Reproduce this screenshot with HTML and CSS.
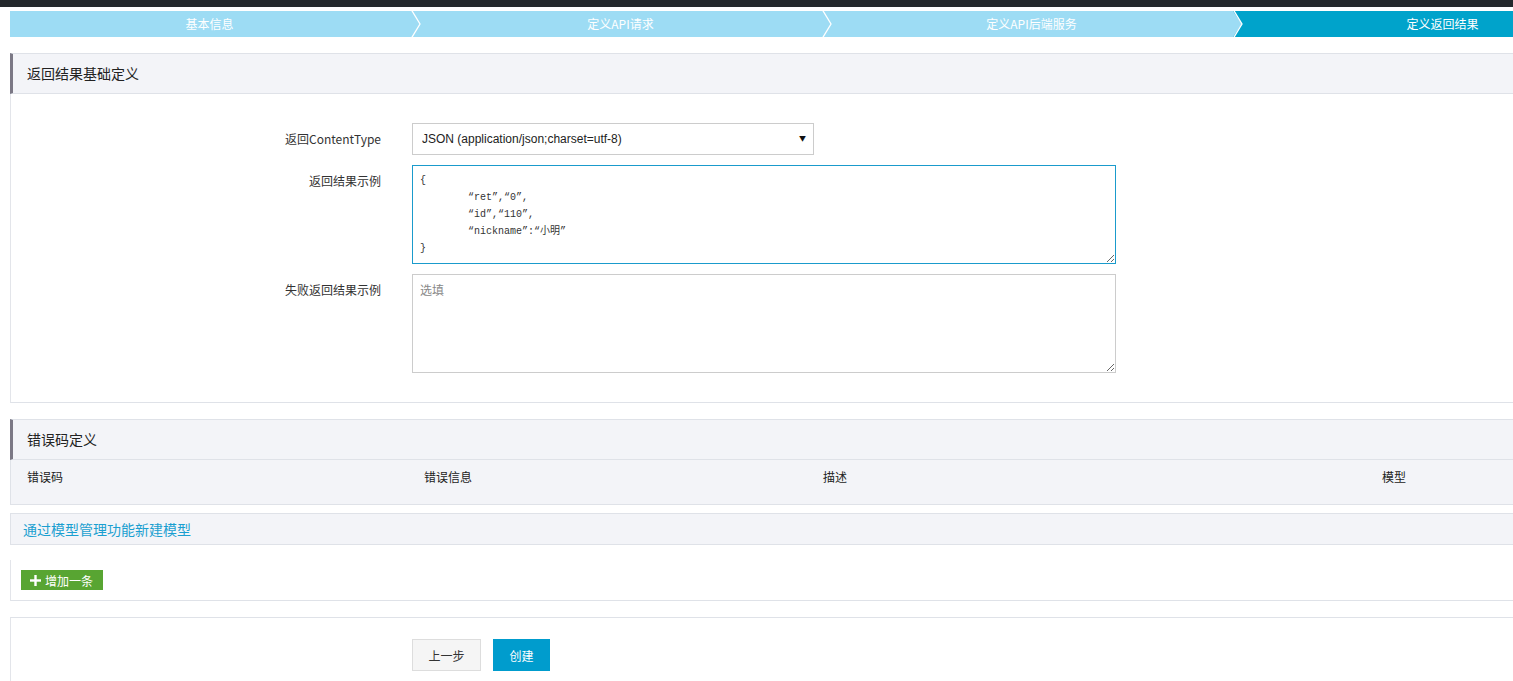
FILE: index.html
```html
<!DOCTYPE html>
<html lang="zh">
<head>
<meta charset="utf-8">
<title>定义返回结果</title>
<link rel="stylesheet" href="styles.css">
</head>
<body>
<div class="topbar"></div>
<div class="page">
  <div class="steps">
    <div class="step"><span class="step-text">基本信息</span><svg class="chev" width="10" height="26" viewBox="0 0 10 26"><rect x="0" y="0" width="10" height="26" fill="#9ddcf4"/><polygon points="0,0 9,13 0,26" fill="#9ddcf4"/><polyline points="0.5,-1 9,13 0.5,27" fill="none" stroke="#fff" stroke-width="1.3"/></svg></div>
    <div class="step"><span class="step-text">定义API请求</span><svg class="chev" width="10" height="26" viewBox="0 0 10 26"><rect x="0" y="0" width="10" height="26" fill="#9ddcf4"/><polygon points="0,0 9,13 0,26" fill="#9ddcf4"/><polyline points="0.5,-1 9,13 0.5,27" fill="none" stroke="#fff" stroke-width="1.3"/></svg></div>
    <div class="step"><span class="step-text">定义API后端服务</span><svg class="chev" width="10" height="26" viewBox="0 0 10 26"><rect x="0" y="0" width="10" height="26" fill="#00a3cb"/><polygon points="0,0 9,13 0,26" fill="#9ddcf4"/><polyline points="0.5,-1 9,13 0.5,27" fill="none" stroke="#fff" stroke-width="1.3"/></svg></div>
    <div class="step active"><span class="step-text">定义返回结果</span></div>
  </div>

  <div class="panel">
    <div class="panel-head">返回结果基础定义</div>
    <div class="panel-body form">
      <div class="row">
        <label class="label">返回ContentType</label>
        <div class="select-wrap">
          <select class="select">
            <option>JSON (application/json;charset=utf-8)</option>
          </select>
        </div>
      </div>
      <div class="row">
        <label class="label">返回结果示例</label>
        <textarea class="textarea focused">{
	“ret”,“0”,
	“id”,“110”,
	“nickname”:“小明”
}</textarea>
      </div>
      <div class="row">
        <label class="label">失败返回结果示例</label>
        <textarea class="textarea" placeholder="选填"></textarea>
      </div>
    </div>
  </div>

  <div class="panel second">
    <div class="panel-head">错误码定义</div>
    <div class="table-head">
      <div>错误码</div>
      <div>错误信息</div>
      <div>描述</div>
      <div>模型</div>
    </div>
  </div>

  <div class="link-row"><a class="link">通过模型管理功能新建模型</a></div>

  <div class="add-row">
    <button class="btn-add"><svg class="plus" width="11" height="11" viewBox="0 0 11 11"><rect x="4.3" y="0" width="2.4" height="11" fill="#fff"/><rect x="0" y="4.3" width="11" height="2.4" fill="#fff"/></svg>增加一条</button>
  </div>

  <div class="footer">
    <button class="btn btn-prev">上一步</button>
    <button class="btn btn-primary">创建</button>
  </div>
</div>
</body>
</html>
```

FILE: styles.css
```css
html, body {
  margin: 0;
  padding: 0;
  overflow: hidden;
  background: #fff;
}
body {
  font-family: "Noto Sans CJK SC", "Liberation Sans", sans-serif;
  font-size: 12px;
  color: #333;
}
.topbar {
  height: 7px;
  background: #24282c;
}
.page {
  width: 1644px;
  margin: 4px 0 0 10px;
}
.steps {
  display: flex;
  height: 26px;
}
.step {
  position: relative;
  width: 411px;
  flex: none;
  box-sizing: border-box;
  padding-right: 12px;
  background: #9ddcf4;
  color: #fff;
  text-align: center;
  line-height: 26px;
  font-size: 12px;
}
.step.active {
  background: #00a3cb;
}
.chev {
  position: absolute;
  right: 0;
  top: 0;
  z-index: 1;
}
.panel {
  margin-top: 16px;
}
.panel-head {
  height: 39px;
  line-height: 39px;
  background: #f3f4f8;
  border-top: 1px solid #dfe2e8;
  border-bottom: 1px solid #dfe2e8;
  border-left: 3px solid #7b7885;
  padding-left: 14px;
  font-size: 14px;
  color: #222;
}
.panel-body {
  border-left: 1px solid #e3e5ea;
  border-bottom: 1px solid #dfe2e8;
}
.form {
  padding: 29px 0 29px;
  display: flex;
  flex-direction: column;
  gap: 10px;
}
.row {
  display: flex;
  align-items: flex-start;
}
.label {
  width: 401px;
  flex: none;
  box-sizing: border-box;
  padding-right: 31px;
  text-align: right;
  line-height: 32px;
  color: #333;
  font-size: 12px;
}
.select-wrap {
  position: relative;
  width: 402px;
}
.select-wrap::after {
  content: "▼";
  position: absolute;
  right: 8px;
  top: 11px;
  font-size: 7px;
  line-height: 9px;
  color: #111;
  pointer-events: none;
}
.select {
  appearance: none;
  -webkit-appearance: none;
  width: 402px;
  height: 32px;
  border: 1px solid #ccc;
  border-radius: 0;
  background: #fff;
  padding: 0 9px;
  font-family: "Liberation Sans", Arial, sans-serif;
  font-size: 12px;
  color: #222;
}
.textarea {
  width: 704px;
  height: 99px;
  box-sizing: border-box;
  border: 1px solid #ccc;
  border-radius: 0;
  padding: 6px 7px;
  margin: 0;
  font-family: "Liberation Mono", "Noto Sans CJK SC", monospace;
  font-size: 10px;
  line-height: 17px;
  color: #333;
  tab-size: 8;
  outline: none;
}
.textarea.focused {
  border-color: #1a9bcc;
}
.textarea::placeholder {
  font-family: "Noto Sans CJK SC", sans-serif;
  font-size: 12px;
  color: #888;
}
.table-head {
  display: grid;
  grid-template-columns: 397px 399px 559px 1fr;
  padding: 9px 0 19px 16px;
  line-height: 16px;
  background: #f3f4f8;
  border-left: 1px solid #dfe2e8;
  border-bottom: 1px solid #dfe2e8;
  color: #222;
}
.link-row {
  margin-top: 8px;
  height: 30px;
  line-height: 30px;
  background: #f3f4f8;
  border: 1px solid #dfe2e8;
  border-right: none;
  padding-left: 12px;
}
.link {
  color: #1a9fd0;
  font-size: 14px;
  cursor: pointer;
}
.add-row {
  margin-top: 15px;
  padding: 10px 0 10px 10px;
  border-left: 1px solid #e3e5ea;
  border-bottom: 1px solid #dfe2e8;
}
.btn-add {
  display: flex;
  align-items: center;
  height: 20px;
  width: 82px;
  padding: 0 0 0 9px;
  border: none;
  border-radius: 0;
  background: #58a532;
  color: #fff;
  font-family: "Noto Sans CJK SC", sans-serif;
  font-size: 12px;
}
.plus {
  margin-right: 4px;
  flex: none;
}
.footer {
  margin-top: 16px;
  border-top: 1px solid #dfe2e8;
  border-left: 1px solid #e3e5ea;
  padding: 21px 0 20px 401px;
  display: flex;
  gap: 12px;
  height: 60px;
}
.btn {
  height: 32px;
  border-radius: 0;
  font-family: "Noto Sans CJK SC", sans-serif;
  font-size: 12px;
  cursor: pointer;
}
.btn-prev {
  width: 69px;
  background: #f5f5f5;
  border: 1px solid #ddd;
  color: #333;
}
.btn-primary {
  width: 57px;
  background: #009ccd;
  border: 1px solid #009ccd;
  color: #fff;
}
```
